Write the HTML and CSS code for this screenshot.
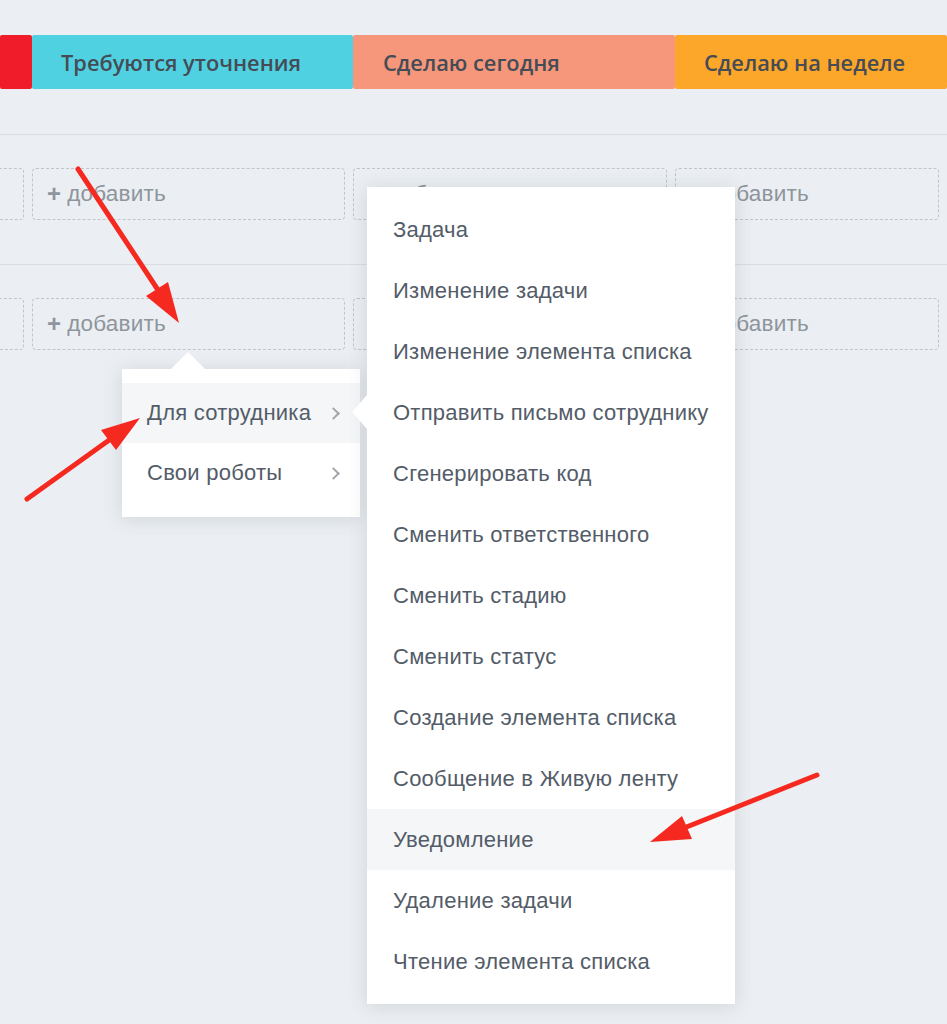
FILE: index.html
```html
<!DOCTYPE html>
<html lang="ru">
<head>
<meta charset="utf-8">
<title>Роботы</title>
<link rel="stylesheet" href="styles.css">
</head>
<body>
<div class="board">
  <div class="cols heads">
    <div class="head head-red"></div>
    <div class="head head-cyan">Требуются уточнения</div>
    <div class="head head-salmon">Сделаю сегодня</div>
    <div class="head head-orange">Сделаю на неделе</div>
  </div>
  <div class="lane">
    <div class="cols">
      <div class="add"></div>
      <div class="add"><span class="plus">+</span>добавить</div>
      <div class="add"><span class="plus">+</span>добавить</div>
      <div class="add"><span class="plus">+</span>добавить</div>
    </div>
  </div>
  <div class="lane">
    <div class="cols">
      <div class="add"></div>
      <div class="add"><span class="plus">+</span>добавить</div>
      <div class="add"><span class="plus">+</span>добавить</div>
      <div class="add"><span class="plus">+</span>добавить</div>
    </div>
  </div>
</div>

<div class="menu menu-main">
  <div class="item active">Для сотрудника <span class="chev"></span></div>
  <div class="item">Свои роботы <span class="chev"></span></div>
</div>

<div class="menu menu-sub">
  <div class="item">Задача</div>
  <div class="item">Изменение задачи</div>
  <div class="item">Изменение элемента списка</div>
  <div class="item">Отправить письмо сотруднику</div>
  <div class="item">Сгенерировать код</div>
  <div class="item">Сменить ответственного</div>
  <div class="item">Сменить стадию</div>
  <div class="item">Сменить статус</div>
  <div class="item">Создание элемента списка</div>
  <div class="item">Сообщение в Живую ленту</div>
  <div class="item active">Уведомление</div>
  <div class="item">Удаление задачи</div>
  <div class="item">Чтение элемента списка</div>
</div>

<svg class="arrows" width="947" height="1024" viewBox="0 0 947 1024">
  <g stroke="#f5291f" stroke-width="5" stroke-linecap="round" fill="none">
    <line x1="78" y1="169" x2="162" y2="296"/>
    <line x1="27" y1="499" x2="112" y2="438"/>
    <line x1="817" y1="775" x2="684" y2="828"/>
  </g>
  <g fill="#f5291f">
    <polygon points="179,323 146,296 168,282"/>
    <polygon points="140,418 116,450 101,430"/>
    <polygon points="650,842 682,816 692,839"/>
  </g>
</svg>
</body>
</html>
```

FILE: styles.css
```css
html, body {
  margin: 0;
  padding: 0;
}
body {
  background: #ebeff3;
  width: 947px;
  height: 1024px;
  overflow: hidden;
  position: relative;
  font-family: "Liberation Sans", Arial, sans-serif;
}
.board {
  padding-top: 35px;
}
.cols {
  display: grid;
  grid-template-columns: 32px 321px 322px 1fr;
}
.heads {
  height: 54px;
  margin-bottom: 45px;
}
.head {
  font-family: "Open Sans", sans-serif;
  font-weight: 600;
  font-size: 21.8px;
  color: #454c55;
  display: flex;
  align-items: center;
  padding-left: 29px;
  border-radius: 2px;
  white-space: nowrap;
}
.head-red { background: #f11c2a; padding-left: 0; }
.head-cyan { background: #50d1e1; }
.head-salmon { background: #f6977b; padding-left: 30px; }
.head-orange { background: #fca62a; }

.lane {
  border-top: 1px solid #d8dde1;
  padding: 33px 0 44px;
}
.add {
  height: 52px;
  box-sizing: border-box;
  margin-right: 8px;
  border: 1px dashed #c0c5cb;
  border-radius: 4px;
  display: flex;
  align-items: center;
  padding-left: 14px;
  font-size: 22.5px;
  letter-spacing: 0.2px;
  color: #8e959c;
  white-space: nowrap;
}
.plus {
  font-weight: bold;
  font-size: 24px;
  margin-right: 6px;
}
.cols .add:first-child {
  margin-left: -20px;
}

.menu {
  position: absolute;
  background: #fff;
  box-shadow: 0 2px 18px rgba(60, 75, 90, 0.16);
  box-sizing: border-box;
}
.menu .item {
  height: 60px;
  display: flex;
  align-items: center;
  padding-left: 25px;
  font-size: 22px;
  letter-spacing: 0.25px;
  color: #535c68;
  position: relative;
  white-space: nowrap;
}
.menu .item.active {
  background: #f5f6f8;
}
.menu-main {
  left: 122px;
  top: 369px;
  width: 238px;
  height: 148px;
  padding: 14px 0;
}
.menu-main::before {
  content: "";
  position: absolute;
  left: 49px;
  top: -17px;
  border-left: 17px solid transparent;
  border-right: 17px solid transparent;
  border-bottom: 17px solid #fff;
}
.chev {
  position: absolute;
  right: 22px;
  top: 26px;
  width: 7px;
  height: 7px;
  border-top: 2px solid #a0a6ad;
  border-right: 2px solid #a0a6ad;
  transform: rotate(45deg);
}
.menu-sub {
  left: 367px;
  top: 187px;
  width: 368px;
  height: 817px;
  padding: 12px 0;
}
.menu-sub .item {
  height: 61px;
  padding-left: 26px;
}
.menu-sub::before {
  content: "";
  position: absolute;
  left: -15px;
  top: 208px;
  border-top: 17px solid transparent;
  border-bottom: 17px solid transparent;
  border-right: 15px solid #fff;
}
.arrows {
  position: absolute;
  left: 0;
  top: 0;
  pointer-events: none;
}
```
